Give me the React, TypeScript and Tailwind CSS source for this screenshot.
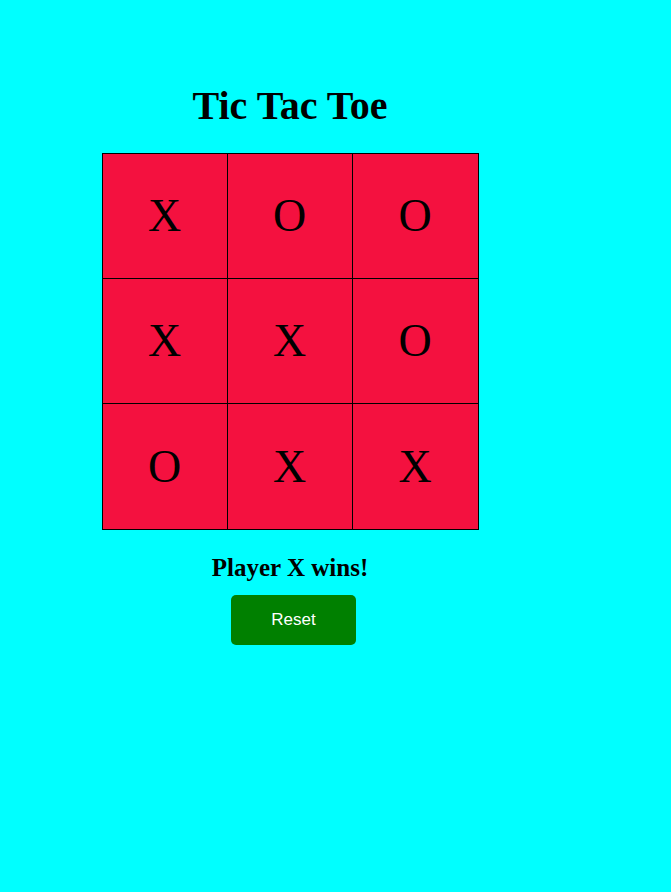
const board = ['X', 'O', 'O', 'X', 'X', 'O', 'O', 'X', 'X'];

export default function App() {
  return (
    <div className="min-h-[892px] w-full bg-[#00ffff]">
      <div className="flex w-[580px] flex-col items-center pt-[84px]">
        <h1 className="font-['Liberation_Serif',serif] text-[40px] font-bold leading-[44px] text-black">
          Tic Tac Toe
        </h1>

        {/* Board */}
        <div className="mt-[25px] grid grid-cols-[125px_125px_126px] grid-rows-[125px_125px_126px] border-l border-t border-black">
          {board.map((value, i) => (
            <button
              key={i}
              className="flex items-center justify-center border-b border-r border-black bg-[#f4113f] font-['Liberation_Serif',serif] text-[46px] leading-none text-black"
            >
              {value}
            </button>
          ))}
        </div>

        <h2 className="mt-[24px] font-['Liberation_Serif',serif] text-[25px] font-bold leading-[28px] text-black">
          Player X wins!
        </h2>

        <button className="ml-[7px] mt-[13px] h-[50px] w-[125px] rounded-[5px] bg-[#008000] font-['Liberation_Sans',sans-serif] text-[17px] text-white">
          Reset
        </button>
      </div>
    </div>
  );
}
